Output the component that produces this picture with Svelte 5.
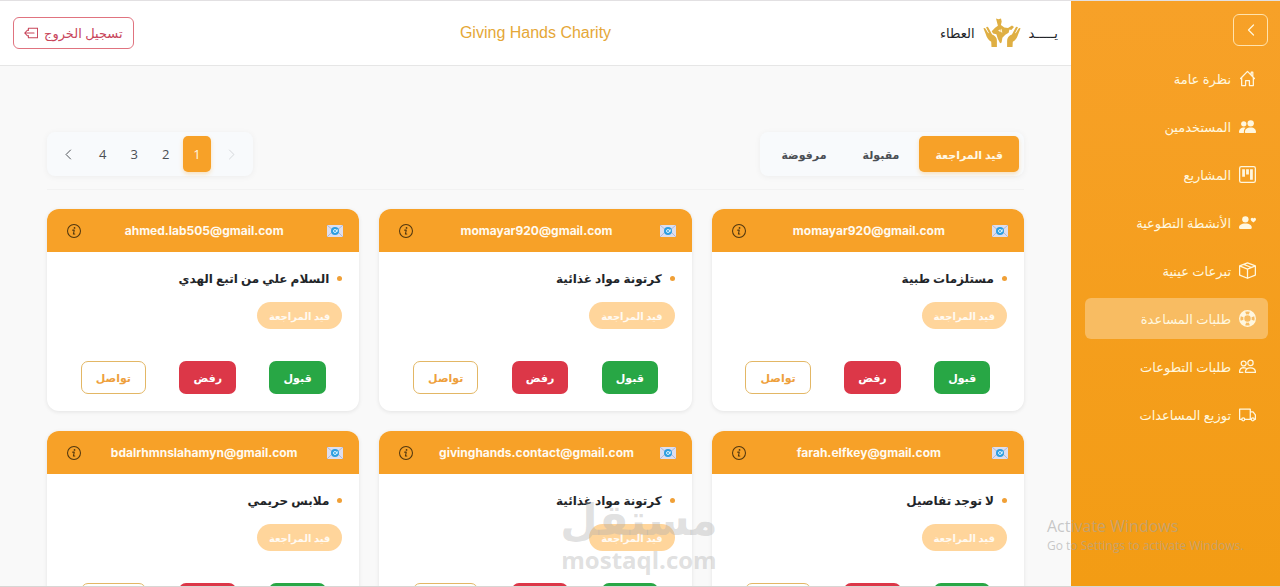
<script>
    const navItems = [
        { label: 'نظرة عامة', icon: 'house' },
        { label: 'المستخدمين', icon: 'peopleFill' },
        { label: 'المشاريع', icon: 'kanban' },
        { label: 'الأنشطة التطوعية', icon: 'personHeart' },
        { label: 'تبرعات عينية', icon: 'box' },
        { label: 'طلبات المساعدة', icon: 'lifebuoy' },
        { label: 'طلبات التطوعات', icon: 'people' },
        { label: 'توزيع المساعدات', icon: 'truck' }
    ];
    const tabs = ['قيد المراجعة', 'مقبولة', 'مرفوضة'];
    const pages = [1, 2, 3, 4];
    const requests = [
        { email: 'momayar920@gmail.com', title: 'مستلزمات طبية' },
        { email: 'momayar920@gmail.com', title: 'كرتونة مواد غذائية' },
        { email: 'ahmed.lab505@gmail.com', title: 'السلام علي من اتبع الهدي' },
        { email: 'farah.elfkey@gmail.com', title: 'لا توجد تفاصيل' },
        { email: 'givinghands.contact@gmail.com', title: 'كرتونة مواد غذائية' },
        { email: 'bdalrhmnslahamyn@gmail.com', title: 'ملابس حريمي' }
    ];

    let activeNav = $state(5);
    let activeTab = $state(0);
    let page = $state(1);
</script>

{#snippet navIcon(name)}
    <svg class="nav__icon" viewBox="0 0 16 16" aria-hidden="true">
        {#if name === 'house'}
            <path class="line" d="M1.500 8 8 1.300 14.500 8M2.500 7v7.700h3.700V10h3.600v4.700h3.700V7M11.500 4.500V2H13v4" />
        {:else if name === 'peopleFill'}
            <circle cx="11" cy="5" r="3" />
            <path d="M5.500 13.500C5.500 10.500 7.500 9 11 9s5 2 5 4.500c0 .4-.3.500-.7.500H6.200c-.4 0-.7-.1-.7-.5z" />
            <circle cx="4.500" cy="5.500" r="2.500" />
            <path d="M0 13.500C0 11 1.500 9 5 9l1.200.1C5 10.200 4.500 11.700 4.600 14H.7c-.4 0-.7-.1-.7-.5z" />
        {:else if name === 'kanban'}
            <rect class="line" x=".6" y=".6" width="14.800" height="14.800" rx="1.600" />
            <path d="M3 3h2.600v7H3zM6.700 3h2.600v5H6.700zM10.400 3H13v10h-2.600z" />
        {:else if name === 'personHeart'}
            <circle cx="6" cy="5" r="3" />
            <path d="M0 13c0-2.500 2-4 6-4s6 1.500 6 4c0 .7-.4 1-1 1H1c-.6 0-1-.3-1-1z" />
            <path d="M13.500 4.200c1-1.400 2.500-.4 2.500.8 0 1.300-1.300 2-2.500 3-1.200-1-2.500-1.700-2.500-3 0-1.200 1.500-2.200 2.500-.8z" />
        {:else if name === 'box'}
            <path class="line" d="M8 .8 15.400 3.700v8.600L8 15.300.6 12.300V3.700L8 .8zM.6 3.700 8 6.700l7.400-3M8 6.700v8.600M4.300 2.300l7.400 2.900" />
        {:else if name === 'lifebuoy'}
            <path fill-rule="evenodd" d="M8 0a8 8 0 1 1 0 16A8 8 0 0 1 8 0zm0 5a3 3 0 1 0 0 6 3 3 0 0 0 0-6zM5.800 1.700l1 2.500a4 4 0 0 1 2.400 0l1-2.500a6.600 6.600 0 0 0-4.400 0zM1.700 5.800a6.600 6.600 0 0 0 0 4.400l2.500-1a4 4 0 0 1 0-2.400l-2.500-1zm12.600 0-2.500 1a4 4 0 0 1 0 2.400l2.500 1a6.600 6.600 0 0 0 0-4.400zM6.800 11.800l-1 2.500a6.600 6.600 0 0 0 4.400 0l-1-2.500a4 4 0 0 1-2.400 0z" />
        {:else if name === 'people'}
            <circle class="line" cx="10.800" cy="4.600" r="2.500" />
            <circle class="line" cx="4.400" cy="5.200" r="2.300" />
            <path class="line" d="M6 13.500c0-3 2-4.300 4.800-4.300s4.700 1.600 4.700 4.300zM6.300 9.600 4.400 9C2 9 .5 10.800.5 13.500h3.200" />
        {:else}
            <path class="line" d="M2.600 12.500h-2V3h10v9.500H5.400M10.600 5.500h2.600l2.200 2.800v4.200h-1M10.600 12.500h1" />
            <circle class="line" cx="4" cy="12.500" r="1.400" />
            <circle class="line" cx="13" cy="12.500" r="1.400" />
        {/if}
    </svg>
{/snippet}

<div class="app" dir="rtl" lang="ar">
    <aside class="sidebar">
        <button class="sidebar__toggle" aria-label="طي القائمة">
            <svg viewBox="0 0 16 16" aria-hidden="true"><path class="line" d="M10.500 3 5.500 8l5 5" /></svg>
        </button>
        <nav class="nav">
            {#each navItems as item, i}
                <a
                    class="nav__link"
                    class:nav__link--active={activeNav === i}
                    href="#section-{i}"
                    onclick={() => (activeNav = i)}
                >
                    {@render navIcon(item.icon)}
                    <span>{item.label}</span>
                </a>
            {/each}
        </nav>
    </aside>

    <div class="page">
        <header class="topbar">
            <div class="brand">
                <span>يـــــد</span>
                <svg class="brand__logo" viewBox="0 0 38 30" aria-hidden="true">
                    <!-- left and right hands -->
                    <path d="M.5 10.500c.8-.8 1.600-.3 2.200.6l2.600 4.200.6-.3-2.800-5.400c.6-1.200 1.700-1 2.400.1l3.600 6.800c1.600.6 3.200 1.600 4.200 3.400.7 1.300.6 3 .6 4.400V29H8.500l-.3-5.200C5 22 3.600 19 2.700 16z" />
                    <path d="M37.500 10.500c-.8-.8-1.600-.3-2.200.6l-2.600 4.200-.6-.3 2.800-5.400c-.6-1.200-1.700-1-2.400.1l-3.600 6.800c-1.600.6-3.200 1.600-4.200 3.400-.7 1.300-.6 3-.6 4.400V29h5.400l.3-5.200c3.200-1.800 4.600-4.800 5.500-7.800z" />
                    <!-- map between the hands -->
                    <path d="m13 .5 2.500.8 2.500-.8.700 3-.8 3.500 3.400 2.400 3.700.6 4-2.500 2 1.500-2.700 3-1.800-.5-.9 3.200-3.300 2-2.900 3-.8 4.800-1.500.8-2.300-4.600-1.400-4.500-3.300-.8-1.400-2.200 3.400-3.500 2.800-2z" />
                    <path class="brand__mark" d="m15 12.500 2.500-1.200-.6 2.500zM18.500 10.500l.8 4.200-2.200-1.300z" />
                </svg>
                <span>العطاء</span>
            </div>
            <h1 class="topbar__title">Giving Hands Charity</h1>
            <div class="topbar__end">
                <button class="logout">
                    <span>تسجيل الخروج</span>
                    <svg viewBox="0 0 16 16" aria-hidden="true">
                        <path class="line" d="M5 5V2.500h10.500v11H5V11M11.500 8H.8M4 4.800.8 8 4 11.200" />
                    </svg>
                </button>
            </div>
        </header>

        <main class="content">
            <div class="toolbar">
                <div class="pills">
                    {#each tabs as tab, i}
                        <button class="tab" class:selected={activeTab === i} onclick={() => (activeTab = i)}>{tab}</button>
                    {/each}
                </div>
                <nav class="pills" aria-label="الصفحات">
                    <button class="pager pager--arrow" disabled={page === 1} aria-label="السابق" onclick={() => page--}>
                        <svg viewBox="0 0 16 16" aria-hidden="true"><path class="line" d="M5.500 2.500 11 8l-5.500 5.500" /></svg>
                    </button>
                    {#each pages as n}
                        <button class="pager" class:selected={page === n} onclick={() => (page = n)}>{n}</button>
                    {/each}
                    <button class="pager pager--arrow" disabled={page === 4} aria-label="التالي" onclick={() => page++}>
                        <svg viewBox="0 0 16 16" aria-hidden="true"><path class="line" d="M10.500 2.500 5 8l5.500 5.500" /></svg>
                    </button>
                </nav>
            </div>

            <div class="cards">
                {#each requests as request}
                    <article class="card">
                        <div class="card__head">
                            <svg class="card__mail" viewBox="0 0 16 12" aria-hidden="true">
                                <path fill="#dcdeef" d="M0 0h16v12H0z" />
                                <path fill="none" stroke="#b3b8d4" d="m0 0 8 7 8-7M0 12l6-6M16 12l-6-6" />
                                <circle cx="8" cy="6" r="4" fill="#2d9fe0" />
                                <circle cx="8" cy="6" r="1.500" fill="none" stroke="#d9f2ff" />
                                <path fill="none" stroke="#d9f2ff" stroke-width=".8" d="M9.500 5v1.800c1 .6 1.400-1.800.4-2.800" />
                            </svg>
                            <span class="card__email" dir="ltr">{request.email}</span>
                            <button class="card__info" aria-label="معلومات">
                                <svg viewBox="0 0 16 16" aria-hidden="true">
                                    <circle class="line" cx="8" cy="8" r="7.400" />
                                    <circle cx="8.600" cy="4.500" r="1" />
                                    <path class="line" d="M6.500 7h1.800l-1 4.500h1.600" />
                                </svg>
                            </button>
                        </div>
                        <div class="card__body">
                            <h2 class="card__title">{request.title}</h2>
                            <span class="badge">قيد المراجعة</span>
                            <div class="card__actions">
                                <button class="btn btn--accept">قبول</button>
                                <button class="btn btn--reject">رفض</button>
                                <button class="btn btn--contact">تواصل</button>
                            </div>
                        </div>
                    </article>
                {/each}
            </div>
        </main>
    </div>

    <div class="stamp" aria-hidden="true">
        <span class="stamp__name">مستقل</span>
        <span class="stamp__site" dir="ltr">mostaql.com</span>
    </div>
    <div class="activate" dir="ltr" lang="en">
        <p class="activate__title">Activate Windows</p>
        <p class="activate__text">Go to Settings to activate Windows.</p>
    </div>
</div>

<style>
    :global(body) {
        background-color: #f9f9f9;
    }
    .app, .app * {
        box-sizing: border-box;
    }
    .app {
        display: flex;
        position: relative;
        height: 100vh;
        overflow: hidden;
        border-top: 1px solid #e2e0e2;
        border-bottom: 1px solid #d8d6d4;
        font-family: "Open Sans", "DejaVu Sans", sans-serif;
        font-size: 13px;
        color: #222529;
    }
    button {
        font: inherit;
        color: inherit;
        background: none;
        border: 0;
        padding: 0;
        cursor: pointer;
    }
    svg {
        display: block;
        width: 16px;
        height: 16px;
        fill: currentColor;
    }
    .line {
        fill: none;
        stroke: currentColor;
        stroke-width: 1.2;
        stroke-linejoin: round;
        stroke-linecap: round;
    }
    .sidebar {
        flex: none;
        width: 209px;
        padding: 13px 12px 0 14px;
        background: linear-gradient(#f7a128, #f39c14);
        color: #fff7df;
    }
    .sidebar__toggle {
        display: flex;
        align-items: center;
        justify-content: center;
        width: 35px;
        height: 32px;
        border: 1px solid #ffe3ae;
        border-radius: 6px;
    }
    .nav {
        display: flex;
        flex-direction: column;
        gap: 7px;
        margin-top: 12px;
    }
    .nav__link {
        display: flex;
        align-items: center;
        gap: 8px;
        height: 41px;
        padding: 0 12px;
        border-radius: 6px;
        color: inherit;
        text-decoration: none;
        white-space: nowrap;
    }
    .nav__link--active {
        background-color: #f8bc62;
    }
    .nav__icon {
        width: 17px;
        height: 17px;
    }
    .page {
        flex: 1;
        min-width: 0;
    }
    .topbar {
        display: grid;
        grid-template-columns: 1fr auto 1fr;
        align-items: center;
        height: 65px;
        padding: 0 13px;
        background-color: #fff;
        border-bottom: 1px solid #e6e6e6;
    }
    .brand {
        display: flex;
        align-items: center;
        gap: 8px;
    }
    .brand__logo {
        width: 38px;
        height: 30px;
        fill: #dfaf43;
    }
    .brand__mark {
        fill: #fff4d6;
    }
    .topbar__title {
        margin: 0;
        font-family: "Liberation Sans", sans-serif;
        font-size: 16px;
        font-weight: 400;
        color: #e5a737;
    }
    .topbar__end {
        display: flex;
        justify-content: flex-end;
    }
    .logout {
        display: flex;
        align-items: center;
        gap: 6px;
        height: 32px;
        padding: 0 10px;
        border: 1px solid #e0737f;
        border-radius: 6px;
        color: #c8455a;
    }
    .logout svg {
        width: 14px;
        height: 14px;
    }
    .content {
        padding: 66px 47px 20px;
    }
    .toolbar {
        display: flex;
        justify-content: space-between;
        padding-bottom: 13px;
        border-bottom: 1px solid #f2f2f2;
    }
    .pills {
        display: flex;
        align-items: center;
        gap: 4px;
        height: 44px;
        padding: 4px 5px;
        background-color: #f8fafc;
        border-radius: 8px;
        box-shadow: 0 1px 6px rgba(0, 0, 0, 0.05);
        color: #4b4f54;
    }
    .tab {
        height: 36px;
        padding: 0 16px;
        border-radius: 5px;
        font-size: 11px;
        font-weight: 700;
    }
    .pager {
        height: 36px;
        padding: 0 10px;
        border-radius: 5px;
    }
    .pager--arrow:disabled {
        color: #d4d7da;
    }
    .pager svg {
        width: 13px;
        height: 13px;
    }
    .selected {
        background-color: #f7a128;
        box-shadow: 0 2px 4px rgba(247, 161, 40, 0.3);
        color: #fff8e6;
    }
    .cards {
        display: grid;
        grid-template-columns: repeat(3, 1fr);
        gap: 20px;
        margin-top: 19px;
    }
    .card {
        min-width: 0;
        border-radius: 12px;
        background-color: #fff;
        box-shadow: 0 1px 4px rgba(0, 0, 0, 0.09);
        overflow: hidden;
    }
    .card__head {
        display: flex;
        align-items: center;
        justify-content: space-between;
        height: 43px;
        padding: 0 16px 0 20px;
        background-color: #f7a128;
        color: #fffaf0;
    }
    .card__mail {
        width: 16px;
        height: 12px;
    }
    .card__email {
        font-family: Inter, "Liberation Sans", sans-serif;
        font-size: 12px;
        font-weight: 700;
    }
    .card__info {
        color: #51370f;
    }
    .card__info svg {
        width: 14px;
        height: 14px;
    }
    .card__body {
        padding: 15px 17px 17px;
    }
    .card__title {
        display: flex;
        align-items: center;
        gap: 8px;
        height: 22px;
        margin: 0 0 13px;
        font-size: 12px;
        font-weight: 700;
    }
    .card__title::before {
        content: "";
        width: 5px;
        height: 5px;
        border-radius: 50%;
        background-color: #f0a037;
    }
    .badge {
        display: flex;
        align-items: center;
        justify-content: center;
        width: fit-content;
        height: 27px;
        padding: 0 12px;
        border-radius: 14px;
        background-color: #ffd59b;
        color: #fffaf2;
        font-size: 10px;
        font-weight: 700;
    }
    .card__actions {
        display: flex;
        justify-content: space-around;
        margin-top: 32px;
    }
    .btn {
        height: 33px;
        padding: 0 14px;
        border-radius: 7px;
        font-size: 11px;
        font-weight: 700;
        color: #fff;
    }
    .btn--accept {
        background-color: #28a745;
    }
    .btn--reject {
        background-color: #dc3748;
    }
    .btn--contact {
        border: 1px solid #e3b765;
        color: #eea03c;
    }
    .stamp {
        position: absolute;
        top: 490px;
        left: 562px;
        display: flex;
        flex-direction: column;
        align-items: center;
        width: 154px;
        color: rgba(175, 175, 175, 0.4);
        font-weight: 700;
        white-space: nowrap;
        pointer-events: none;
    }
    .stamp__name {
        font-size: 43px;
        line-height: 56px;
    }
    .stamp__site {
        font-family: "Open Sans", sans-serif;
        font-size: 24px;
        line-height: 26px;
    }
    .activate {
        position: absolute;
        top: 515px;
        left: 1047px;
        color: rgba(165, 165, 165, 0.6);
        font-family: "Open Sans", sans-serif;
        white-space: nowrap;
        pointer-events: none;
    }
    .activate p {
        margin: 0;
        line-height: 20px;
    }
    .activate__title {
        font-size: 16px;
    }
    .activate__text {
        font-size: 12px;
    }
</style>
